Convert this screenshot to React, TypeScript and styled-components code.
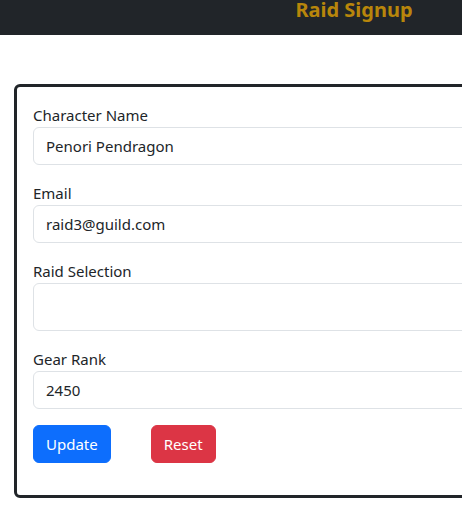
import React from "react";
import styled, { createGlobalStyle } from "styled-components";

const Global = createGlobalStyle`
  html, body { margin: 0; padding: 0; background: #fff; }
  body {
    overflow: hidden;
    font-family: "Segoe UI", "Noto Sans", "Liberation Sans", sans-serif;
    font-size: 15px;
    line-height: 24px;
    color: #212529;
  }
  * { box-sizing: border-box; }
`;

const Page = styled.div`
  width: 708px;
`;

const NavBar = styled.header`
  height: 35px;
  background: #212529;
  display: flex;
  justify-content: center;
  align-items: flex-start;
  padding-top: 1px;
`;

const Title = styled.h1`
  margin: 0;
  font-size: 20px;
  line-height: 18px;
  font-weight: 700;
  color: #b8860b;
`;

const Main = styled.main`
  padding: 49px 14px 0;
`;

const Card = styled.form`
  border: 3px solid #212529;
  border-radius: 6px;
  padding: 16px 16px 16px;
  display: flex;
  flex-direction: column;
`;

const Field = styled.div`
  display: flex;
  flex-direction: column;
  margin-bottom: 16px;
`;

const Label = styled.label`
  display: block;
  line-height: 24px;
`;

const Input = styled.input`
  display: block;
  width: 100%;
  height: 38px;
  padding: 6px 12px;
  font: inherit;
  line-height: 24px;
  color: #212529;
  background: #fff;
  border: 1px solid #dee2e6;
  border-radius: 6px;
  outline: none;
`;

const Select = styled.div`
  width: 100%;
  height: 48px;
  border: 1px solid #dee2e6;
  border-radius: 6px;
  background: #fff;
`;

const Buttons = styled.div`
  display: flex;
  gap: 40px;
  margin-bottom: 16px;
`;

const Button = styled.button<{ $variant: "primary" | "danger" }>`
  height: 38px;
  padding: 6px 12px;
  font: inherit;
  line-height: 24px;
  color: #fff;
  border: 1px solid ${(p) => (p.$variant === "primary" ? "#0d6efd" : "#dc3545")};
  background: ${(p) => (p.$variant === "primary" ? "#0d6efd" : "#dc3545")};
  border-radius: 6px;
  cursor: pointer;
`;

export default function App() {
  return (
    <>
      <Global />
      <Page>
        <NavBar>
          <Title>Raid Signup</Title>
        </NavBar>
        <Main>
          <Card onSubmit={(e) => e.preventDefault()}>
            <Field>
              <Label>Character Name</Label>
              <Input defaultValue="Penori Pendragon" />
            </Field>
            <Field>
              <Label>Email</Label>
              <Input defaultValue="raid3@guild.com" />
            </Field>
            <Field>
              <Label>Raid Selection</Label>
              <Select />
            </Field>
            <Field>
              <Label>Gear Rank</Label>
              <Input defaultValue="2450" />
            </Field>
            <Buttons>
              <Button type="button" $variant="primary">Update</Button>
              <Button type="reset" $variant="danger">Reset</Button>
            </Buttons>
          </Card>
        </Main>
      </Page>
    </>
  );
}
